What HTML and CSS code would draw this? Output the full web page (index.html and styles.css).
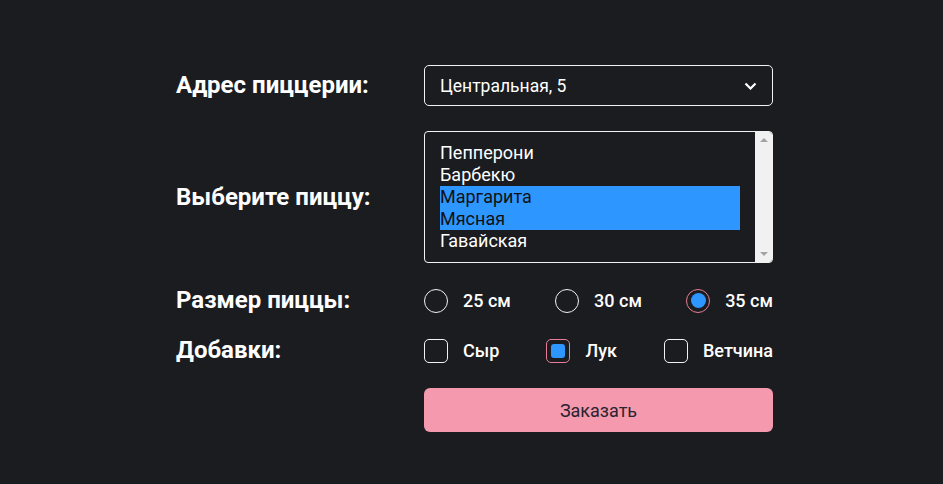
FILE: index.html
```html
<!DOCTYPE html>
<html lang="ru">
    <head>
        <title>Заказ пиццы</title>
        <meta charset="UTF-8">
        <meta name="viewport" content="width=device-width, initial-scale=1.0">
        <link rel="stylesheet" href="styles.css">
    </head>
    <body>
        <form class="order">
            <!-- address -->
            <div class="label">Адрес пиццерии:</div>
            <div class="select">
                <span>Центральная, 5</span>
                <svg class="chevron" width="13" height="8" viewBox="0 0 13 8">
                    <polyline points="1.5,1.5 6.5,6.5 11.5,1.5" fill="none" stroke="#fff" stroke-width="2.2"/>
                </svg>
            </div>

            <!-- pizza list -->
            <div class="label">Выберите пиццу:</div>
            <div class="listbox">
                <div class="options">
                    <div class="option">Пепперони</div>
                    <div class="option">Барбекю</div>
                    <div class="option selected">Маргарита</div>
                    <div class="option selected">Мясная</div>
                    <div class="option">Гавайская</div>
                </div>
                <div class="scrollbar">
                    <span class="arrow up"></span>
                    <span class="arrow down"></span>
                </div>
            </div>

            <!-- size -->
            <div class="label">Размер пиццы:</div>
            <div class="choices">
                <label class="choice"><span class="radio"></span>25 см</label>
                <label class="choice"><span class="radio"></span>30 см</label>
                <label class="choice"><span class="radio checked"></span>35 см</label>
            </div>

            <!-- extras -->
            <div class="label">Добавки:</div>
            <div class="choices">
                <label class="choice"><span class="check"></span>Сыр</label>
                <label class="choice"><span class="check checked"></span>Лук</label>
                <label class="choice"><span class="check"></span>Ветчина</label>
            </div>

            <div></div>
            <button type="button" class="btn">Заказать</button>
        </form>
    </body>
</html>
```

FILE: styles.css
```css
body {
    margin: 0;
    background-color: #1b1c20;
    color: #fff;
    font-family: Roboto, "Noto Sans", sans-serif;
}
.order {
    display: grid;
    grid-template-columns: 248px 349px;
    row-gap: 25px;
    align-items: center;
    margin: 65px 0 0 176px;
}
.label {
    font-size: 24px;
    font-weight: 700;
    line-height: 25px;
}
.select {
    height: 41px;
    box-sizing: border-box;
    border: 1px solid #f2f2f2;
    border-radius: 5px;
    padding: 0 15px 0 15px;
    display: flex;
    align-items: center;
    justify-content: space-between;
    font-size: 17.5px;
}
.listbox {
    height: 132px;
    box-sizing: border-box;
    border: 1px solid #f2f2f2;
    border-radius: 4px;
    display: flex;
    overflow: hidden;
}
.options {
    flex: 1;
    padding: 10px 15px;
    font-size: 18px;
}
.option {
    height: 22px;
    line-height: 22px;
}
.option.selected {
    background-color: #2e96ff;
    color: #111;
}
.scrollbar {
    width: 17px;
    background-color: #f1f1f1;
    display: flex;
    flex-direction: column;
    justify-content: space-between;
    align-items: center;
    padding: 6px 0;
}
.arrow {
    width: 0;
    height: 0;
    border-left: 4px solid transparent;
    border-right: 4px solid transparent;
}
.arrow.up {
    border-bottom: 4px solid #a3a3a3;
}
.arrow.down {
    border-top: 4px solid #a3a3a3;
}
.choices {
    display: flex;
    justify-content: space-between;
    font-size: 18px;
    font-weight: 500;
}
.choice {
    display: flex;
    align-items: center;
    gap: 15px;
    line-height: 25px;
}
.radio, .check {
    width: 24px;
    height: 24px;
    box-sizing: border-box;
    border: 1.5px solid #f2f2f2;
    display: flex;
    align-items: center;
    justify-content: center;
}
.radio {
    border-radius: 50%;
}
.check {
    border-radius: 5px;
}
.radio.checked, .check.checked {
    border-color: #e77d96;
}
.radio.checked::after {
    content: "";
    width: 15px;
    height: 15px;
    border-radius: 50%;
    background-color: #2e96ff;
}
.check.checked::after {
    content: "";
    width: 14px;
    height: 14px;
    border-radius: 3px;
    background-color: #2e96ff;
}
.btn {
    height: 44px;
    border: none;
    border-radius: 6px;
    background-color: #f499ae;
    color: #2a2430;
    font-family: Roboto, "Noto Sans", sans-serif;
    font-size: 18px;
}
```
